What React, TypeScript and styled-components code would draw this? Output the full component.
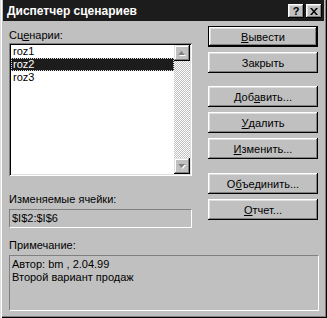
import React from 'react'
import styled, { createGlobalStyle } from 'styled-components'

const GlobalStyle = createGlobalStyle`
  html, body {
    margin: 0;
    padding: 0;
    background: #c0c0c0;
  }
  * {
    box-sizing: border-box;
  }
`

const Window = styled.div`
  width: 327px;
  height: 318px;
  display: flex;
  flex-direction: column;
  background: #c0c0c0;
  padding: 0 3px 3px 3px;
  font-family: 'Liberation Sans', Arial, sans-serif;
  font-size: 11px;
  color: #000;
  box-shadow: inset 1px 0 #dfdfdf, inset 2px 0 #fff, inset -1px -1px #000, inset -2px -2px #808080;
`

const TitleBar = styled.div`
  height: 21px;
  display: flex;
  align-items: center;
  justify-content: space-between;
  padding: 0 2px 0 4px;
  background: #1c1c1c;
`

const TitleText = styled.span`
  color: #fff;
  font-weight: bold;
  font-size: 12px;
  padding-top: 1px;
`

const TitleButtons = styled.div`
  display: flex;
  gap: 2px;
  margin-top: 1px;
`

const TitleButton = styled.div`
  width: 16px;
  height: 14px;
  background: #c0c0c0;
  display: flex;
  align-items: center;
  justify-content: center;
  box-shadow: inset -1px -1px #000, inset 1px 1px #fff, inset -2px -2px #808080, inset 2px 2px #dfdfdf;
  font-weight: bold;
  font-size: 11px;
  line-height: 1;
`

const Content = styled.div`
  display: flex;
  flex-direction: column;
  padding: 5px 5px 0 6px;
`

const TopRow = styled.div`
  display: flex;
  justify-content: space-between;
`

const LeftColumn = styled.div`
  width: 183px;
  display: flex;
  flex-direction: column;
  padding-top: 3px;
`

const Label = styled.div<{ $gap?: number }>`
  height: 13px;
  line-height: 13px;
  margin-top: ${(p) => p.$gap || 0}px;
  white-space: nowrap;
`

const ListBox = styled.div`
  margin-top: 1px;
  height: 133px;
  display: flex;
  padding: 2px;
  background: #fff;
  box-shadow: inset 1px 1px #808080, inset -1px -1px #fff, inset 2px 2px #000, inset -2px -2px #dfdfdf;
`

const Items = styled.div`
  flex: 1;
  padding-top: 0;
`

const Item = styled.div<{ $selected?: boolean }>`
  height: 13px;
  line-height: 13px;
  padding-left: 2px;
  background: ${(p) => (p.$selected ? '#1c1c1c' : 'transparent')};
  color: ${(p) => (p.$selected ? '#fff' : '#000')};
  outline: ${(p) => (p.$selected ? '1px dotted #dcdcdc' : 'none')};
  outline-offset: -1px;
`

const ScrollBar = styled.div`
  width: 16px;
  display: flex;
  flex-direction: column;
  justify-content: space-between;
  background: repeating-conic-gradient(#fff 0 25%, #c0c0c0 0 50%) 0 0 / 2px 2px;
`

const ScrollButton = styled.div`
  width: 16px;
  height: 16px;
  background: #c0c0c0;
  display: flex;
  align-items: center;
  justify-content: center;
  box-shadow: inset -1px -1px #000, inset 1px 1px #dfdfdf, inset -2px -2px #808080, inset 2px 2px #fff;
`

const Field = styled.div<{ $height: number }>`
  height: ${(p) => p.$height}px;
  margin-top: 3px;
  padding: 2px 2px;
  line-height: 13px;
  background: #c0c0c0;
  border-top: 1px solid #808080;
  border-left: 1px solid #808080;
  border-bottom: 1px solid #fff;
  border-right: 1px solid #fff;
`

const ButtonColumn = styled.div`
  width: 110px;
  display: flex;
  flex-direction: column;
  margin-right: 1px;
`

const ButtonGroup = styled.div<{ $gap?: number }>`
  display: flex;
  flex-direction: column;
  gap: 5px;
  margin-top: ${(p) => p.$gap || 0}px;
`

const Button = styled.div<{ $default?: boolean }>`
  height: 21px;
  display: flex;
  align-items: center;
  justify-content: center;
  background: #c0c0c0;
  border: ${(p) => (p.$default ? '1px solid #000' : 'none')};
  box-shadow: inset -1px -1px #000, inset 1px 1px #fff, inset -2px -2px #808080, inset 2px 2px #dfdfdf;
  white-space: nowrap;
`

const NoteSection = styled.div`
  display: flex;
  flex-direction: column;
  margin-top: 11px;
`

const Arrow = ({ down }: { down?: boolean }) => (
  <svg width="8" height="5" viewBox="0 0 8 5">
    {down ? (
      <>
        <path d="M1 1h7L4.5 5z" fill="#fff" />
        <path d="M0 0h7L3.5 4z" fill="#808080" />
      </>
    ) : (
      <>
        <path d="M1 5h7L4.5 1z" fill="#fff" />
        <path d="M0 4h7L3.5 0z" fill="#808080" />
      </>
    )}
  </svg>
)

const scenarios = ['roz1', 'roz2', 'roz3']

const App = () => {
  return (
    <>
      <GlobalStyle />
      <Window>
        <TitleBar>
          <TitleText>Диспетчер сценариев</TitleText>
          <TitleButtons>
            <TitleButton>?</TitleButton>
            <TitleButton>
              <svg width="8" height="7" viewBox="0 0 8 7">
                <path d="M0 0h2l2 2.5L6 0h2L5 3.5 8 7H6L4 4.5 2 7H0l3-3.5z" fill="#000" />
              </svg>
            </TitleButton>
          </TitleButtons>
        </TitleBar>

        <Content>
          <TopRow>
            <LeftColumn>
              <Label>
                Сц<u>е</u>нарии:
              </Label>
              <ListBox>
                <Items>
                  {scenarios.map((s) => (
                    <Item key={s} $selected={s === 'roz2'}>
                      {s}
                    </Item>
                  ))}
                </Items>
                <ScrollBar>
                  <ScrollButton>
                    <Arrow />
                  </ScrollButton>
                  <ScrollButton>
                    <Arrow down />
                  </ScrollButton>
                </ScrollBar>
              </ListBox>
              <Label $gap={17}>Изменяемые ячейки:</Label>
              <Field $height={19}>$I$2:$I$6</Field>
            </LeftColumn>

            <ButtonColumn>
              <ButtonGroup>
                <Button $default>
                  <u>В</u>ывести
                </Button>
                <Button>Закрыть</Button>
              </ButtonGroup>
              <ButtonGroup $gap={13}>
                <Button>
                  Доб<u>а</u>вить...
                </Button>
                <Button>
                  <u>У</u>далить
                </Button>
                <Button>
                  <u>И</u>зменить...
                </Button>
              </ButtonGroup>
              <ButtonGroup $gap={14}>
                <Button>
                  О<u>б</u>ъединить...
                </Button>
                <Button>
                  <u>О</u>тчет...
                </Button>
              </ButtonGroup>
            </ButtonColumn>
          </TopRow>

          <NoteSection>
            <Label>Примечание:</Label>
            <Field $height={56}>
              Автор: bm , 2.04.99
              <br />
              Второй вариант продаж
            </Field>
          </NoteSection>
        </Content>
      </Window>
    </>
  )
}

export default App
